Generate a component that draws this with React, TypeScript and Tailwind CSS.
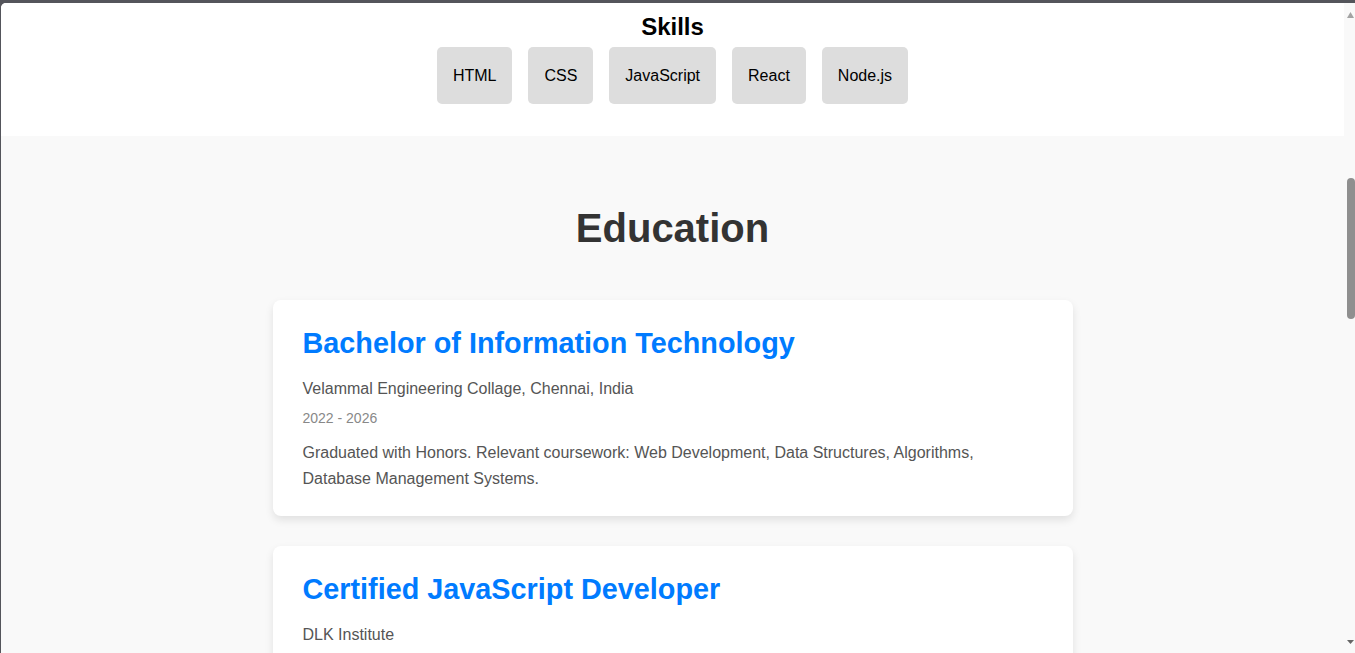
import React from 'react';

const skills = ['HTML', 'CSS', 'JavaScript', 'React', 'Node.js'];

const education = [
    {
        title: 'Bachelor of Information Technology',
        school: 'Velammal Engineering Collage, Chennai, India',
        years: '2022 - 2026',
        text: 'Graduated with Honors. Relevant coursework: Web Development, Data Structures, Algorithms, Database Management Systems.',
    },
    {
        title: 'Certified JavaScript Developer',
        school: 'DLK Institute',
        years: '2023',
        text: 'Completed an intensive course on modern JavaScript, covering ES6+, asynchronous programming and DOM manipulation.',
    },
];

const Scrollbar: React.FC = () => (
    <div className="w-[11px] bg-[#f9f9f9] flex flex-col items-end">
        <svg className="mt-[9px] mr-px" width="7" height="6" viewBox="0 0 7 6">
            <path d="M3.5 0L7 6H0z" fill="#a3a3a3" />
        </svg>
        <div className="mt-[160px] w-[8px] h-[141px] bg-[#8f8f8f] rounded-t-[4px] rounded-b-[4px]"></div>
        <div className="flex-1"></div>
        <svg className="mb-[9px] mr-px" width="7" height="4" viewBox="0 0 7 4">
            <path d="M0 0H7L3.5 4z" fill="#666" />
        </svg>
    </div>
);

const App: React.FC = () => {
    return (
        <div className="h-[653px] overflow-hidden bg-[#54555b] pt-[3px] pl-px flex flex-col font-['Liberation_Sans',Arial,sans-serif]">
            <div className="flex-1 flex min-h-0 rounded-tl-[5px] overflow-hidden bg-white">
                <div className="flex-1 min-w-0 overflow-hidden">
                    {/* skills */}
                    <section className="bg-white pt-[10px] h-[133px]">
                        <h2 className="text-center text-[24px] font-bold leading-[normal] text-black">Skills</h2>
                        <div className="mt-[6px] flex justify-center gap-4">
                            {skills.map((s) => (
                                <span key={s} className="h-[57px] px-4 flex items-center bg-[#dddddd] rounded-[5px] text-[16px] text-black">
                                    {s}
                                </span>
                            ))}
                        </div>
                    </section>

                    {/* education */}
                    <section className="bg-[#f9f9f9] pt-[70px] pb-16">
                        <h2 className="text-center text-[40px] font-bold leading-[normal] text-[#333333]">Education</h2>
                        <div className="mt-[49px] flex flex-col items-center gap-[30px]">
                            {education.map((e) => (
                                <div key={e.title} className="w-[800px] bg-white rounded-[8px] shadow-[0_4px_8px_rgba(0,0,0,0.1)] pt-[27px] pb-[25px] px-[30px]">
                                    <h3 className="text-[28.8px] font-bold leading-[normal] text-[#007bff]">{e.title}</h3>
                                    <p className="mt-[16px] text-[16px] leading-[1.6] text-[#555555]">{e.school}</p>
                                    <p className="mt-[5px] text-[14px] leading-[1.6] text-[#888888]">{e.years}</p>
                                    <p className="mt-[11px] text-[16px] leading-[1.6] text-[#555555]">{e.text}</p>
                                </div>
                            ))}
                        </div>
                    </section>
                </div>
                <Scrollbar />
            </div>
        </div>
    );
};

export default App;
